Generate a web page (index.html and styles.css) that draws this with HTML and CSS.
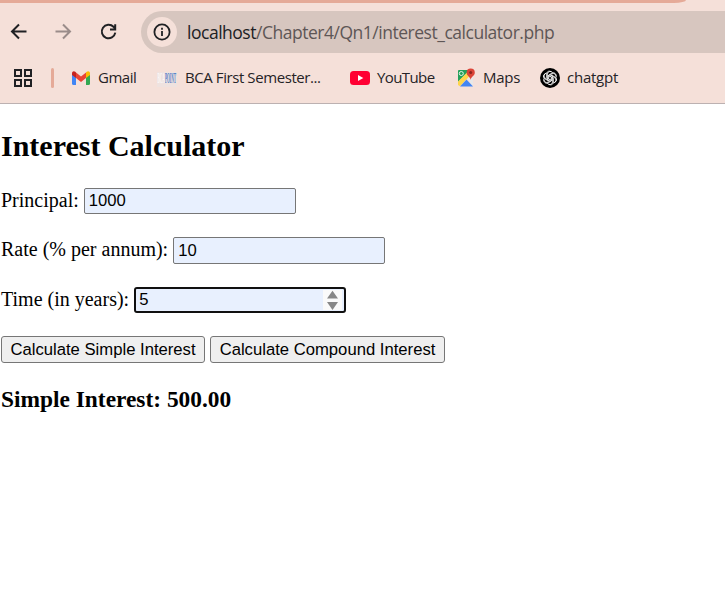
FILE: index.html
```html
<!DOCTYPE html>
<html lang="en">
<head>
<meta charset="utf-8">
<title>Interest Calculator</title>
<link rel="stylesheet" href="styles.css">
</head>
<body>
<header class="browser">
  <div class="tabstrip"></div>
  <div class="toolbar">
    <svg class="nav" viewBox="0 0 20 20"><path d="M17.500 9.500H3.500M10 2.500L3 9.500l7 7"/></svg>
    <svg class="nav forward" viewBox="0 0 20 20"><path d="M1.500 9.500h14M9 2.500l7 7-7 7"/></svg>
    <svg class="nav" viewBox="0 0 20 20"><path d="M16.300 10.700A6.800 6.800 0 1 1 14.500 4.800L16.200 6.500M16.200 2.300v5.200H11"/></svg>
    <div class="address">
      <span class="info"><svg viewBox="0 0 18 18"><circle cx="9" cy="9" r="7.6"/><path d="M9 8v5M9 4.8v2"/></svg></span>
      <span class="url"><span class="host">localhost</span>/Chapter4/Qn1/interest_calculator.php</span>
    </div>
  </div>
  <nav class="bookmarks">
    <svg class="apps" viewBox="0 0 18 18"><path d="M1 1h6v6H1zM11 1h6v6h-6zM1 11h6v6H1zM11 11h6v6h-6z"/></svg>
    <i class="divider"></i>
    <a class="bookmark gmail"><svg viewBox="0 0 20 20"><path fill="#4285f4" d="M1 5l4 3v9H2.500a1.500 1.500 0 0 1-1.500-1.500z"/><path fill="#34a853" d="M19 5l-4 3v9h2.500a1.500 1.500 0 0 0 1.500-1.500z"/><path fill="#ea4335" d="M5 4.500l5 4 5-4V10l-5 4-5-4z"/><path fill="#c5221f" d="M1 5.200C1 3.200 3 2.600 4.300 3.800L5 4.500V10L1 7z"/><path fill="#fbbc04" d="M19 5.200c0-2-2-2.600-3.300-1.400l-.7.7V10l4-3z"/></svg><span>Gmail</span></a>
    <a class="bookmark bca"><svg viewBox="0 0 20 20"><path fill="#e9e4e6" d="M0 4h20v15H0z" opacity=".5"/><g transform="scale(.4 1)"><text x="1" y="15" textLength="47" lengthAdjust="spacingAndGlyphs" fill="#4f80c8"><tspan fill="#faf7f7">BCA</tspan>POINT</text></g></svg><span>BCA First Semester...</span></a>
    <a class="bookmark youtube"><svg viewBox="0 0 20 20"><rect y="3" width="20" height="14" rx="3.500" fill="#ff0033"/><path fill="#fff" d="M8 7l5.300 3L8 13z"/></svg><span>YouTube</span></a>
    <a class="bookmark maps"><svg viewBox="0 0 20 20"><path fill="#24a05a" d="M2.500 2H14L2 14V2.500z"/><path fill="#e8e8e8" d="M11 9l6-4v11l-1 2z"/><path fill="#ffd54b" d="M2 13.500L12 3.500l3 3L4 18.300 2 17z"/><path fill="#4285f4" d="M4 18.500l6.500-7 6.500 7z"/><circle cx="5.300" cy="5.500" r="2" fill="none" stroke="#e4f4e9"/><path fill="#db4437" d="M14.600 12c-.3-3.500-4-4-4-7.300a4.100 4.100 0 0 1 8.200 0c0 3.300-3.900 3.800-4.200 7.300z"/><circle cx="14.700" cy="4.600" r="1.500" fill="#8c241c"/></svg><span>Maps</span></a>
    <a class="bookmark chatgpt"><svg viewBox="0 0 20 20"><circle cx="10" cy="10" r="10"/><g fill="none" stroke="#fff" stroke-width=".8"><path id="petal" d="M7.400 10.900V6.200a2.900 2.900 0 0 1 5.300-1.500M8.600 10.800V7l3.500-2a2.700 2.700 0 0 1 3.800 3.200"/><use href="#petal" transform="rotate(60 10 10)"/><use href="#petal" transform="rotate(120 10 10)"/><use href="#petal" transform="rotate(180 10 10)"/><use href="#petal" transform="rotate(240 10 10)"/><use href="#petal" transform="rotate(300 10 10)"/></g></svg><span>chatgpt</span></a>
  </nav>
</header>
<main>
  <h2>Interest Calculator</h2>
  <form>
    <div class="row principal"><label for="principal">Principal:</label><input id="principal" value="1000"></div>
    <div class="row rate"><label for="rate">Rate (% per annum):</label><input id="rate" value="10"></div>
    <div class="row time"><label for="time">Time (in years):</label><span class="focused"><input id="time" value="5"><svg class="spinner" viewBox="0 0 19 20"><path d="M4 8.500L9.500.700 15 8.500zM4 12h11l-5.500 8z"/></svg></span></div>
    <div class="actions"><button type="button" class="simple">Calculate Simple Interest</button><button type="button" class="compound">Calculate Compound Interest</button></div>
  </form>
  <h3>Simple Interest: 500.00</h3>
</main>
</body>
</html>
```
FILE: styles.css
```css
* { box-sizing: border-box; }
body { margin: 0; background: #fff; color: #000; font: 20px/23px "Liberation Serif", serif; overflow: hidden; }
svg { display: block; flex: none; }
.browser { height: 104px; background: #f5e0d9; border-bottom: 1px solid #bcb1b1; font-family: "Open Sans", sans-serif; color: #252326; }
.tabstrip { width: 686px; height: 3px; background: #e5aa98; border-radius: 0 0 12px 0 / 0 0 3px 0; }
.toolbar { display: flex; align-items: center; height: 58px; padding-left: 9px; }
.nav { width: 20px; height: 20px; margin-right: 25px; fill: none; stroke: #202124; stroke-width: 2; }
.forward { stroke: #9a8c8a; }
.address { display: flex; align-items: center; flex: 1; height: 42px; margin-left: -3px; padding-left: 6px; background: #d7c6bf; border-radius: 21px 0 0 21px; }
.info { display: grid; place-items: center; width: 30px; height: 30px; border-radius: 50%; background: #f5e0d9; }
.info svg { width: 18px; height: 18px; fill: none; stroke: #202124; stroke-width: 1.8; }
.url { margin-left: 10px; font-size: 17.5px; letter-spacing: -.48px; white-space: nowrap; color: #5e5656; }
.host { color: #202124; }
.bookmarks { display: flex; align-items: center; height: 34px; padding-left: 14px; font-size: 15px; letter-spacing: -.25px; }
.apps { width: 18px; height: 18px; fill: none; stroke: #202124; stroke-width: 2; }
.divider { width: 3px; height: 20px; margin: 0 18px 0 19px; border-radius: 2px; background: #e5aa98; }
.bookmark { display: flex; align-items: center; gap: 7px; white-space: nowrap; }
.bookmark span { margin-top: -2px; }
.bookmark svg { width: 20px; height: 20px; }
.bookmark text { font: bold 14px "Liberation Serif", serif; letter-spacing: 0; }
.gmail { width: 86px; margin-left: -1px; letter-spacing: -.5px; }
.bca { width: 193px; gap: 8px; letter-spacing: -.42px; }
.youtube { width: 106px; letter-spacing: -.6px; }
.maps { width: 84px; }
main { padding: 25px 1px 0; }
h2 { margin: 0 0 25px; font-size: 30px; line-height: 34px; }
.row { display: flex; align-items: flex-start; gap: 5px; height: 27px; }
.principal { margin-bottom: 22px; }
.principal input { height: 26px; }
.rate { margin-bottom: 23px; }
.time { height: 26px; margin-bottom: 23px; }
label { white-space: pre; padding-top: 1px; }
input { width: 212px; height: 27px; padding: 1px 4px; border: 1px solid #767676; border-radius: 2px; background: #e8f0fe; color: #000; font: 16.667px "Liberation Sans", sans-serif; outline: none; }
.focused { display: flex; align-items: center; width: 212px; height: 26px; border: 2px solid #101010; border-radius: 3px; background: #e8f0fe; }
.focused input { flex: 1; width: 0; height: 22px; padding: 0 3px; border: 0; }
.spinner { width: 19px; height: 20px; margin-right: 2px; background: #fafafa; fill: #878787; }
.actions { display: flex; gap: 5px; }
button { height: 27px; padding: 0; border: 1px solid #767676; border-radius: 3px; background: #efefef; color: #000; font: 16.667px "Liberation Sans", sans-serif; white-space: nowrap; }
.simple { width: 204px; }
.compound { width: 235px; }
h3 { margin: 23px 0 0; font-size: 23.4px; line-height: 27px; }
```
